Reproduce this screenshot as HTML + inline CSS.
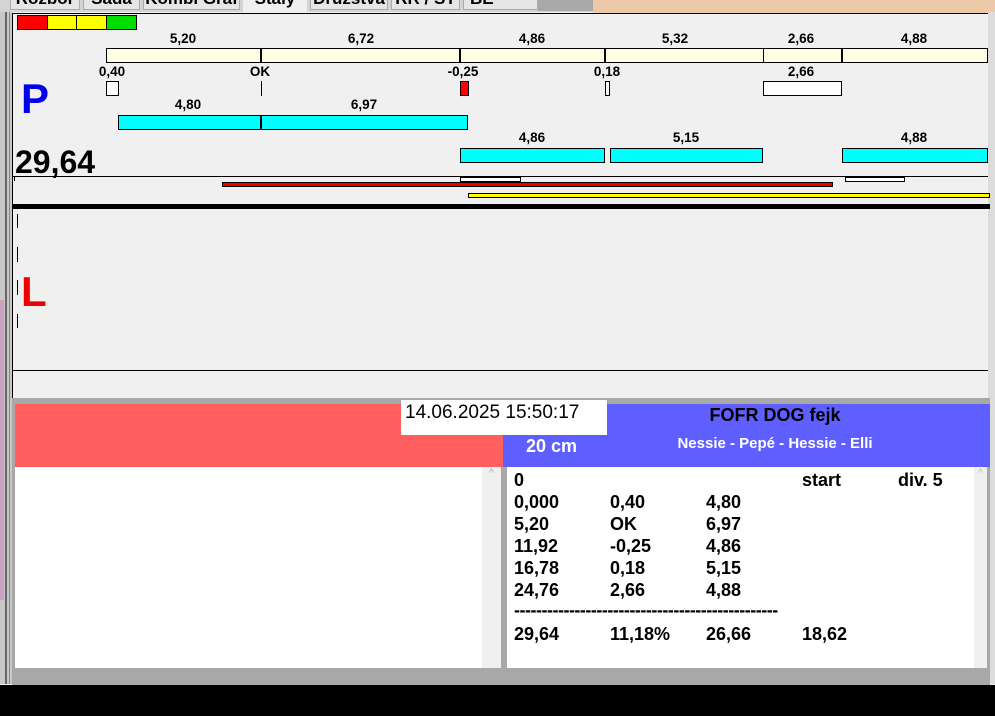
<!DOCTYPE html>
<html><head><meta charset="utf-8"><style>
*{margin:0;padding:0;box-sizing:border-box}
body{width:995px;height:716px;overflow:hidden;background:#f0f0f0;font-family:"Liberation Sans",Arial,sans-serif;position:relative}
.a{position:absolute}
.lb{position:absolute;width:80px;text-align:center;font-size:13.5px;font-weight:bold;color:#000;line-height:14px}
.bx{position:absolute;border:1px solid #000}
.t{position:absolute;font-size:18px;font-weight:bold;line-height:20px;color:#000}
.tab{position:absolute;top:0;height:10px;background:#e6e6e6;border:1px solid #aaa;border-top:none;overflow:hidden;font-size:17px;font-weight:bold;line-height:14px;text-align:center;color:#000}
.tab span{position:relative;top:-8px}
</style></head><body>
<div class="a" style="left:0;top:0;width:995px;height:12px;background:#d4d4d4"></div>
<div class="tab" style="left:10px;width:70px"><span>Rozbor</span></div>
<div class="tab" style="left:83px;width:57px"><span>Sada</span></div>
<div class="tab" style="left:143px;width:97px"><span>Kombi Graf</span></div>
<div class="tab" style="left:243px;width:64px;height:12px;background:#f0f0f0;border:none"><span>Stály</span></div>
<div class="tab" style="left:310px;width:78px"><span>Družstva</span></div>
<div class="tab" style="left:391px;width:69px"><span>RR / ST</span></div>
<div class="tab" style="left:463px;width:75px;text-align:left;padding-left:6px"><span>BE</span></div>
<div class="a" style="left:538px;top:0;width:55px;height:11px;background:#a8a8a8"></div>
<div class="a" style="left:593px;top:0;width:402px;height:13px;background:#ecc9a8"></div>
<div class="a" style="left:0;top:12px;width:12px;height:672px;background:#c8c8c8"></div>
<div class="a" style="left:5px;top:12px;width:2px;height:672px;background:#666"></div>
<div class="a" style="left:9px;top:12px;width:1px;height:672px;background:#888"></div>
<div class="a" style="left:0;top:300px;width:4px;height:300px;background:#c9a0c0"></div>
<div class="a" style="left:988px;top:12px;width:7px;height:672px;background:#dcdcdc"></div>
<div class="a" style="left:12px;top:13px;width:976px;height:386px;background:#f0f0f0;border-top:1px solid #000;border-left:1px solid #000"></div>
<div class="bx" style="left:17px;top:15px;width:31px;height:15px;background:#f00"></div>
<div class="bx" style="left:47px;top:15px;width:30px;height:15px;background:#ff0"></div>
<div class="bx" style="left:76px;top:15px;width:31px;height:15px;background:#ff0"></div>
<div class="bx" style="left:106px;top:15px;width:31px;height:15px;background:#0d0"></div>
<div class="bx" style="left:106px;top:48px;width:882px;height:15px;background:#ffffe6"></div>
<div class="a" style="left:260px;top:48px;width:2px;height:15px;background:#000"></div>
<div class="a" style="left:459px;top:48px;width:2px;height:15px;background:#000"></div>
<div class="a" style="left:604px;top:48px;width:2px;height:15px;background:#000"></div>
<div class="a" style="left:763px;top:48px;width:1px;height:15px;background:#000"></div>
<div class="a" style="left:841px;top:48px;width:2px;height:15px;background:#000"></div>
<div class="lb" style="left:143px;top:32px">5,20</div>
<div class="lb" style="left:321px;top:32px">6,72</div>
<div class="lb" style="left:492px;top:32px">4,86</div>
<div class="lb" style="left:635px;top:32px">5,32</div>
<div class="lb" style="left:761px;top:32px">2,66</div>
<div class="lb" style="left:874px;top:32px">4,88</div>
<div class="lb" style="left:72px;top:65px">0,40</div>
<div class="lb" style="left:220px;top:65px">OK</div>
<div class="lb" style="left:423px;top:65px">-0,25</div>
<div class="lb" style="left:567px;top:65px">0,18</div>
<div class="lb" style="left:761px;top:65px">2,66</div>
<div class="bx" style="left:106px;top:81px;width:13px;height:15px;background:#fff"></div>
<div class="a" style="left:261px;top:81px;width:1px;height:15px;background:#000"></div>
<div class="bx" style="left:460px;top:81px;width:9px;height:15px;background:#f00"></div>
<div class="bx" style="left:605px;top:81px;width:5px;height:15px;background:#fff"></div>
<div class="bx" style="left:763px;top:81px;width:79px;height:15px;background:#fff"></div>
<div class="a" style="left:21px;top:76px;font-size:42px;font-weight:bold;color:#0000ee;line-height:46px">P</div>
<div class="lb" style="left:148px;top:98px">4,80</div>
<div class="lb" style="left:324px;top:98px">6,97</div>
<div class="bx" style="left:118px;top:115px;width:350px;height:15px;background:#0ff"></div>
<div class="a" style="left:260px;top:115px;width:2px;height:15px;background:#000"></div>
<div class="lb" style="left:492px;top:131px">4,86</div>
<div class="lb" style="left:646px;top:131px">5,15</div>
<div class="lb" style="left:874px;top:131px">4,88</div>
<div class="bx" style="left:460px;top:148px;width:145px;height:15px;background:#0ff"></div>
<div class="bx" style="left:610px;top:148px;width:153px;height:15px;background:#0ff"></div>
<div class="bx" style="left:842px;top:148px;width:146px;height:15px;background:#0ff"></div>
<div class="a" style="left:15px;top:144px;font-size:32px;font-weight:bold;line-height:36px">29,64</div>
<div class="a" style="left:12px;top:176px;width:976px;height:1px;background:#000"></div>
<div class="a" style="left:14px;top:176px;width:1px;height:5px;background:#000"></div>
<div class="bx" style="left:460px;top:177px;width:61px;height:5px;background:#fff"></div>
<div class="bx" style="left:845px;top:177px;width:60px;height:5px;background:#fff"></div>
<div class="bx" style="left:222px;top:182px;width:611px;height:5px;background:#e00"></div>
<div class="bx" style="left:468px;top:193px;width:522px;height:5px;background:#ff0"></div>
<div class="a" style="left:12px;top:204px;width:978px;height:5px;background:#000"></div>
<div class="a" style="left:17px;top:214px;width:1px;height:14px;background:#000"></div>
<div class="a" style="left:17px;top:247px;width:1px;height:15px;background:#000"></div>
<div class="a" style="left:17px;top:280px;width:1px;height:15px;background:#000"></div>
<div class="a" style="left:17px;top:314px;width:1px;height:14px;background:#000"></div>
<div class="a" style="left:21px;top:270px;font-size:42px;font-weight:bold;color:#e00;line-height:44px">L</div>
<div class="a" style="left:12px;top:370px;width:976px;height:1px;background:#000"></div>
<div class="a" style="left:12px;top:398px;width:978px;height:288px;background:#a8a8a8"></div>
<div class="a" style="left:15px;top:404px;width:488px;height:63px;background:#ff5f5f"></div>
<div class="a" style="left:503px;top:404px;width:487px;height:63px;background:#5f5fff"></div>
<div class="a" style="left:401px;top:400px;width:206px;height:35px;background:#fff;font-size:19px;line-height:22px;padding-left:4px;padding-top:2px">14.06.2025 15:50:17</div>
<div class="a" style="left:526px;top:436px;font-size:18px;font-weight:bold;color:#fff">20 cm</div>
<div class="a" style="left:620px;top:405px;width:310px;text-align:center;font-size:18px;font-weight:bold">FOFR DOG fejk</div>
<div class="a" style="left:620px;top:435px;width:310px;text-align:center;font-size:15px;font-weight:bold;color:#fff">Nessie - Pepé - Hessie - Elli</div>
<div class="a" style="left:15px;top:467px;width:486px;height:201px;background:#fff"></div>
<div class="a" style="left:482px;top:467px;width:19px;height:201px;background:#f0f0f0;color:#aaa;font-size:11px;text-align:center">^</div>
<div class="a" style="left:507px;top:467px;width:480px;height:201px;background:#fff"></div>
<div class="a" style="left:974px;top:467px;width:13px;height:201px;background:#f0f0f0;color:#bbb;font-size:11px;text-align:center">^</div>
<div class="t" style="left:514px;top:470px">0</div><div class="t" style="left:802px;top:470px">start</div><div class="t" style="left:898px;top:470px">div. 5</div>
<div class="t" style="left:514px;top:492px">0,000</div><div class="t" style="left:610px;top:492px">0,40</div><div class="t" style="left:706px;top:492px">4,80</div>
<div class="t" style="left:514px;top:514px">5,20</div><div class="t" style="left:610px;top:514px">OK</div><div class="t" style="left:706px;top:514px">6,97</div>
<div class="t" style="left:514px;top:536px">11,92</div><div class="t" style="left:610px;top:536px">-0,25</div><div class="t" style="left:706px;top:536px">4,86</div>
<div class="t" style="left:514px;top:558px">16,78</div><div class="t" style="left:610px;top:558px">0,18</div><div class="t" style="left:706px;top:558px">5,15</div>
<div class="t" style="left:514px;top:580px">24,76</div><div class="t" style="left:610px;top:580px">2,66</div><div class="t" style="left:706px;top:580px">4,88</div>
<div class="t" style="left:514px;top:600px;width:272px;overflow:hidden;white-space:nowrap;letter-spacing:-0.5px">------------------------------------------------</div>
<div class="t" style="left:514px;top:624px">29,64</div><div class="t" style="left:610px;top:624px">11,18%</div><div class="t" style="left:706px;top:624px">26,66</div><div class="t" style="left:802px;top:624px">18,62</div>
<div class="a" style="left:0;top:685px;width:995px;height:31px;background:#000"></div>
</body></html>
